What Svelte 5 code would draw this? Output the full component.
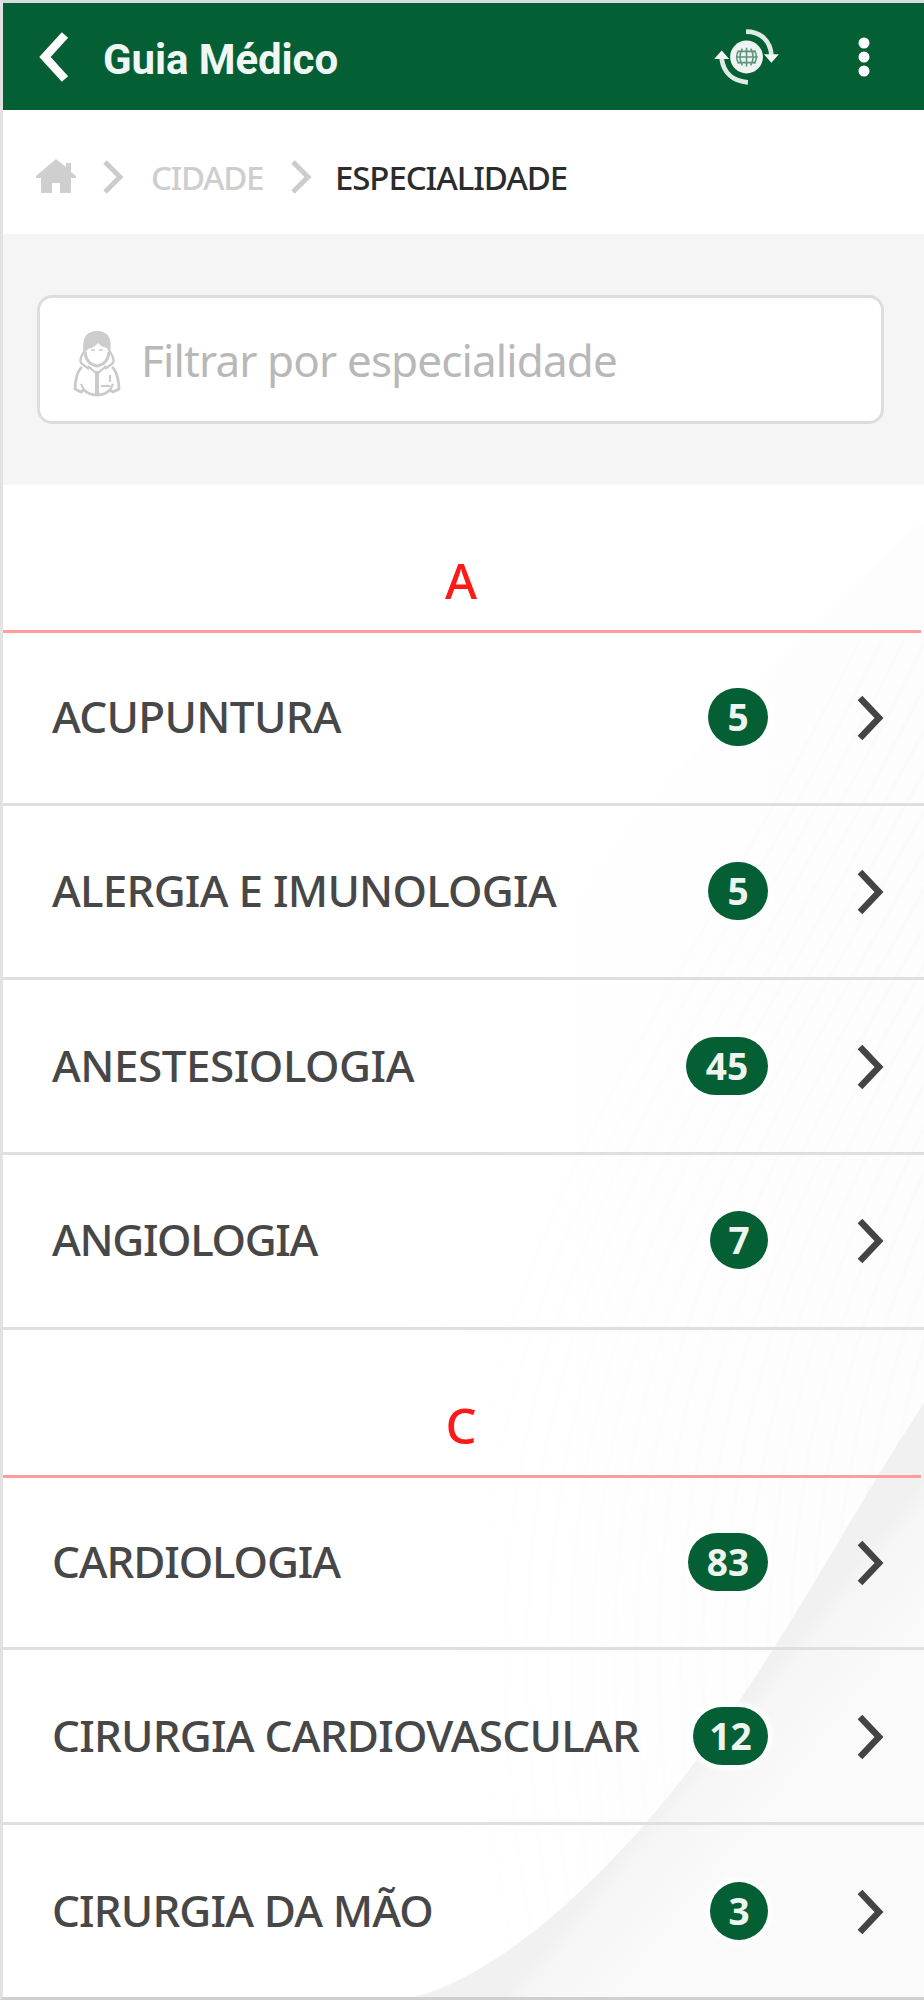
<script>
  const groups = [
    {
      letter: 'A',
      items: [
        { name: 'ACUPUNTURA', count: 5, width: 289, badge: 60 },
        { name: 'ALERGIA E IMUNOLOGIA', count: 5, width: 504, badge: 60 },
        { name: 'ANESTESIOLOGIA', count: 45, width: 362, badge: 82 },
        { name: 'ANGIOLOGIA', count: 7, width: 265, badge: 58 }
      ]
    },
    {
      letter: 'C',
      items: [
        { name: 'CARDIOLOGIA', count: 83, width: 288, badge: 80 },
        { name: 'CIRURGIA CARDIOVASCULAR', count: 12, width: 587, badge: 75 },
        { name: 'CIRURGIA DA MÃO', count: 3, width: 381, badge: 58 }
      ]
    }
  ];

  const waves = Array.from({ length: 30 }, (_, i) => i);

  // Spreads the tracking of a label so that it fills the given width.
  function fit(node, width) {
    node.style.letterSpacing = '0px';
    const natural = node.getBoundingClientRect().width;
    node.style.letterSpacing = `${(width - natural) / node.textContent.length}px`;
  }
</script>

<div class="screen">
  <header>
    <svg class="back" width="34" height="56" viewBox="0 0 34 56"><path d="M28 6 8 28l20 22" fill="none" stroke="#fff" stroke-width="8.500" /></svg>
    <h1><span use:fit={235}>Guia Médico</span></h1>
    <svg class="globe" width="68" height="60" viewBox="0 0 72 64">
      <g fill="none" stroke="#dfeae4" stroke-width="5">
        <path d="M35 5C51 5 61 15 62 30" />
        <path d="M37 59C20 58 11 48 9 34" />
      </g>
      <path d="M54 29h16l-8 9zM1 34l8-9 8 9z" fill="#f2f7f4" />
      <circle cx="35.500" cy="32" r="17.500" fill="#eef4f1" />
      <g fill="none" stroke="#5e957b" stroke-width="1.700">
        <path d="M24.500 32h23M27 26h18M27 38h18M35.500 22v20" />
        <path d="M31 23q-5 9 0 18M40 23q5 9 0 18M27 25q-4 7 0 14M44 25q4 7 0 14" />
      </g>
    </svg>
    <svg class="dots" width="12" height="42" viewBox="0 0 12 42" fill="#fff"><circle cx="6" cy="7" r="5.500" /><circle cx="6" cy="21" r="5.500" /><circle cx="6" cy="35" r="5.500" /></svg>
  </header>

  <nav>
    <svg class="home" width="40" height="36" viewBox="0 0 40 36" fill="#cfcfcf"><path d="M20 1 30 9V5h5v9l5 4v2h-5v15H24V25h-8v10H5V20H0v-2z" /></svg>
    <svg class="sep" width="22" height="36" viewBox="0 0 22 36"><path d="M3 3l15 15L3 33" fill="none" stroke="#ccc" stroke-width="5" /></svg>
    <span class="crumb first"><span use:fit={112}>CIDADE</span></span>
    <svg class="sep" width="22" height="36" viewBox="0 0 22 36"><path d="M3 3l15 15L3 33" fill="none" stroke="#ccc" stroke-width="5" /></svg>
    <span class="crumb current"><span use:fit={232}>ESPECIALIDADE</span></span>
  </nav>

  <section class="filter">
    <div class="field">
      <svg width="48" height="68" viewBox="0 0 48 68" fill="none" stroke="#cacaca" stroke-width="2.200" stroke-linejoin="round">
        <path d="M12 21C9 26 6 30 8 34l8 6M36 21c3 5 6 9 4 13l-8 6" />
        <path d="M12 23q1 12 12 14 11-2 12-14" stroke-width="3" />
        <path d="M11 25C8 8 14 2 24 2s16 6 13 23l-3-6q-6-1-9-5-4 5-10 6z" fill="#cdcdcd" stroke="none" />
        <path d="M18 21h4M26 21h4" stroke-width="1.500" />
        <path d="M15 37l9 8 9-8" />
        <path d="M9 38C4 42 2 53 2 60l6 3 3-2q5 5 13 5t13-5l3 2 6-3C46 53 44 42 39 38" stroke-width="2.800" />
        <path d="M8 55l3 6M40 55l-3 6" />
        <path d="M24 42v23" stroke-width="4" />
        <path d="M37 46v7M28 57h9" />
      </svg>
      <span class="placeholder"><span use:fit={476}>Filtrar por especialidade</span></span>
    </div>
  </section>

  <main>
    <svg class="backdrop" width="921" height="1515" viewBox="3 485 921 1515" aria-hidden="true">
      <defs>
        <linearGradient id="fold" gradientUnits="userSpaceOnUse" x1="690" y1="1765" x2="770" y2="1830">
          <stop offset="0" stop-color="#f1f1f1" />
          <stop offset=".2" stop-color="#f6f6f6" />
          <stop offset="1" stop-color="#fafafa" />
        </linearGradient>
        <linearGradient id="veil" gradientUnits="userSpaceOnUse" x1="400" y1="0" x2="924" y2="0">
          <stop offset="0" stop-color="#f7f7f7" stop-opacity="0" />
          <stop offset="1" stop-color="#f7f7f7" />
        </linearGradient>
      </defs>
      <path d="M924 520C760 680 480 930 410 1240c-20 280 40 500 130 760h384z" fill="url(#veil)" opacity=".25" />
      <g fill="none" stroke="url(#veil)" stroke-width="4">
        {#each waves as i}
          <path d="M{860 + i * 22} 640C{620 + i * 22} 1130 {360 + i * 22} 1330 {500 + i * 22} 2000" opacity=".4" />
        {/each}
      </g>
      <path d="M924 1403C870 1485 825 1567 774 1648 728 1720 690 1772 645 1824 589 1888 490 1985 400 2000H924z" fill="url(#fold)" />
    </svg>

    {#each groups as group}
      <h2>{group.letter}</h2>
      <ul>
        {#each group.items as item}
          <li>
            <span class="name"><span use:fit={item.width}>{item.name}</span></span>
            <span class="badge" style="width: {item.badge}px">{item.count}</span>
            <svg class="go" width="30" height="48" viewBox="0 0 30 48"><path d="M4 4l19 20L4 44" fill="none" stroke="#444" stroke-width="6.500" /></svg>
          </li>
        {/each}
      </ul>
    {/each}
  </main>
</div>

<style>
  :global(body) { margin: 0; background: #fff; }

  .screen {
    box-sizing: border-box;
    width: 924px;
    height: 2000px;
    overflow: hidden;
    border-top: 3px solid #dadada;
    border-left: 3px solid #e2e2e2;
    border-bottom: 3px solid #cfcfcf;
    background: #fff;
    font-family: 'Noto Sans', 'Open Sans', sans-serif;
  }

  svg { display: block; flex: none; }
  span { white-space: nowrap; }

  header {
    display: flex;
    align-items: center;
    box-sizing: border-box;
    height: 107px;
    padding-left: 34px;
    background: #046034;
    color: #f0f6f3;
  }
  h1 {
    width: 607px;
    margin: 7px 0 0 32px;
    font: 700 42px/50px Roboto, sans-serif;
  }
  .globe { margin-left: 3px; }
  .dots { margin-left: 77px; }

  nav {
    display: flex;
    align-items: center;
    box-sizing: border-box;
    height: 124px;
    padding: 10px 0 0 33px;
  }
  .home { margin-top: -3px; }
  .sep { margin-left: 26px; }
  .crumb {
    width: 112px;
    margin: 1px 0 0 27px;
    color: #cecece;
    font-size: 33px;
    font-weight: 500;
    line-height: 40px;
  }
  .first + .sep { margin-left: 27px; }
  .current {
    width: auto;
    margin-left: 23px;
    color: #2c2c2c;
  }

  .filter {
    box-sizing: border-box;
    height: 251px;
    padding: 61px 40px 0 34px;
    background: #f5f5f5;
  }
  .field {
    display: flex;
    align-items: center;
    box-sizing: border-box;
    height: 129px;
    padding: 6px 0 0 33px;
    border: 3px solid #ddd;
    border-radius: 15px;
    background: #fff;
  }
  .placeholder {
    margin: -5px 0 0 20px;
    color: #b8b8b8;
    font-size: 44px;
    line-height: 60px;
  }

  main { position: relative; height: 1515px; }
  .backdrop { position: absolute; top: 0; left: 0; }
  h2 {
    position: relative;
    box-sizing: border-box;
    height: 148px;
    margin: 0 3px 0 0;
    padding: 60px 2px 0 0;
    border-bottom: 3px solid #ff9c9c;
    color: #ff1a1a;
    font-size: 49px;
    font-weight: 500;
    line-height: 70px;
    text-align: center;
  }
  ul {
    position: relative;
    margin: 0;
    padding: 0;
    list-style: none;
  }
  li {
    display: flex;
    align-items: center;
    box-sizing: border-box;
    height: 174.800px;
    padding: 0 38px 3px 49px;
    border-bottom: 3px solid #dfdfdf;
  }
  li:first-child { height: 172.500px; }
  .name {
    flex: 1;
    color: #474747;
    font-size: 44px;
    font-weight: 500;
    line-height: 60px;
  }
  .badge {
    flex: none;
    height: 58px;
    margin-top: 2px;
    border-radius: 29px;
    background: #046034;
    box-shadow: 0 0 4px 5px rgba(255, 255, 255, .8);
    color: #eef5f1;
    font-size: 37px;
    font-weight: 700;
    line-height: 58px;
    text-align: center;
  }
  .go { margin: 4px 0 0 88px; }
</style>
